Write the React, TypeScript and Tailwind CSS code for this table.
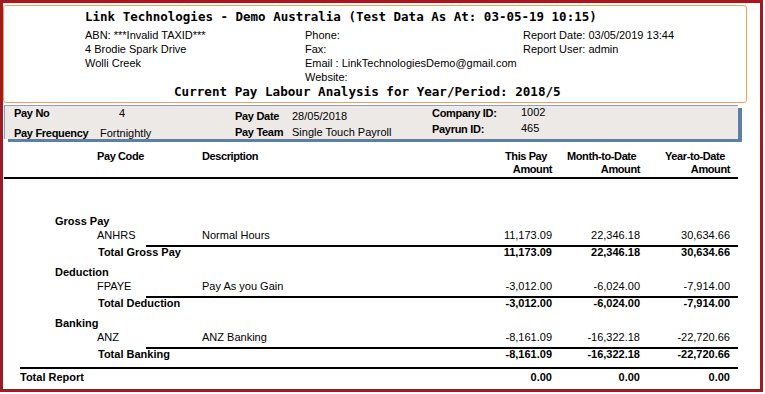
import React from 'react';

const mono = "font-['DejaVu_Sans_Mono','Liberation_Mono',monospace]";

type Item = { code: string; desc: string; amounts: string[] };
type Group = { name: string; total: string; item: Item; totals: string[] };

const groups: Group[] = [
  {
    name: 'Gross Pay',
    total: 'Total Gross Pay',
    item: { code: 'ANHRS', desc: 'Normal Hours', amounts: ['11,173.09', '22,346.18', '30,634.66'] },
    totals: ['11,173.09', '22,346.18', '30,634.66'],
  },
  {
    name: 'Deduction',
    total: 'Total Deduction',
    item: { code: 'FPAYE', desc: 'Pay As you Gain', amounts: ['-3,012.00', '-6,024.00', '-7,914.00'] },
    totals: ['-3,012.00', '-6,024.00', '-7,914.00'],
  },
  {
    name: 'Banking',
    total: 'Total Banking',
    item: { code: 'ANZ', desc: 'ANZ Banking', amounts: ['-8,161.09', '-16,322.18', '-22,720.66'] },
    totals: ['-8,161.09', '-16,322.18', '-22,720.66'],
  },
];

const Amounts: React.FC<{ values: string[]; bold?: boolean }> = ({ values, bold }) => (
  <>
    <div className={`w-[90px] text-right ${bold ? 'font-bold' : ''}`}>{values[0]}</div>
    <div className={`w-[88px] text-right ${bold ? 'font-bold' : ''}`}>{values[1]}</div>
    <div className={`w-[90px] text-right ${bold ? 'font-bold' : ''}`}>{values[2]}</div>
  </>
);

const App: React.FC = () => {
  return (
    <div className="w-[765px] h-[394px] bg-white overflow-hidden">
      <div className="w-[763px] h-[392px] border-[3px] border-[#9f1b21] bg-white text-black font-['Liberation_Sans',Arial,sans-serif] text-[11px]">
        {/* Report header */}
        <div className="mt-[2px] w-[744px] h-[98px] border border-[#f5a24a] rounded-[3px]">
          <div className={`${mono} font-bold text-[12.5px] leading-[15px] pt-[3px] pl-[81px] whitespace-nowrap`}>
            Link Technologies - Demo Australia (Test Data As At: 03-05-19 10:15)
          </div>
          <div className="mt-[4px] pl-[81px] flex leading-[14px] whitespace-nowrap">
            <div className="w-[220px]">
              <div>ABN: ***Invalid TAXID***</div>
              <div>4 Brodie Spark Drive</div>
              <div>Wolli Creek</div>
            </div>
            <div className="w-[218px]">
              <div>Phone:</div>
              <div>Fax:</div>
              <div>Email : LinkTechnologiesDemo@gmail.com</div>
              <div>Website:</div>
            </div>
            <div>
              <div>Report Date: 03/05/2019 13:44</div>
              <div>Report User: admin</div>
            </div>
          </div>
          <div className={`${mono} font-bold text-[12.6px] leading-[15px] pl-[170px] whitespace-nowrap`}>
            Current Pay Labour Analysis for Year/Period: 2018/5
          </div>
        </div>

        {/* Pay summary band */}
        <div className="mt-[2px] ml-[1px] w-[734px] h-[34px] bg-[#ece9e6] border-l border-t border-[#8ba0bb] shadow-[4px_3px_0_#5c7fa6] flex leading-[14px] whitespace-nowrap">
          <div className="w-[230px] pl-[9px]">
            <div className="flex">
              <div className="w-[105px] font-bold tracking-[-0.3px]">Pay No</div>
              <div>4</div>
            </div>
            <div className="flex mt-[6px]">
              <div className="w-[86px] font-bold tracking-[-0.3px]">Pay Frequency</div>
              <div>Fortnightly</div>
            </div>
          </div>
          <div className="w-[197px] pt-[3px]">
            <div className="flex">
              <div className="w-[57px] font-bold tracking-[-0.3px]">Pay Date</div>
              <div>28/05/2018</div>
            </div>
            <div className="flex mt-[2px]">
              <div className="w-[57px] font-bold tracking-[-0.3px]">Pay Team</div>
              <div>Single Touch Payroll</div>
            </div>
          </div>
          <div>
            <div className="flex">
              <div className="w-[89px] font-bold tracking-[-0.3px]">Company ID:</div>
              <div className="-mt-[1px]">1002</div>
            </div>
            <div className="flex mt-[2px]">
              <div className="w-[89px] font-bold tracking-[-0.3px]">Payrun ID:</div>
              <div className="-mt-[1px]">465</div>
            </div>
          </div>
        </div>

        {/* Column headings */}
        <div className="mt-[11px] flex font-bold leading-[13px] tracking-[-0.4px] whitespace-nowrap">
          <div className="w-[94px]" />
          <div className="w-[105px]">Pay Code</div>
          <div className="w-[300px]">Description</div>
          <div className="w-[50px] flex flex-col pl-[3px]">
            <span>This Pay</span>
            <span className="self-end">Amount</span>
          </div>
          <div className="w-[88px] flex flex-col pl-[15px]">
            <span>Month-to-Date</span>
            <span className="self-end">Amount</span>
          </div>
          <div className="w-[90px] flex flex-col pl-[25px]">
            <span>Year-to-Date</span>
            <span className="self-end">Amount</span>
          </div>
        </div>
        <div className="mt-[1px] ml-[1px] w-[734px] h-[2px] bg-black" />

        {/* Rows */}
        <div className="mt-[35px] whitespace-nowrap">
          {groups.map((g, i) => (
            <div key={g.name} className={i > 0 ? 'mt-[8px]' : ''}>
              <div className="pl-[52px] font-bold leading-[14px]">{g.name}</div>
              <div className="flex leading-[14px]">
                <div className="w-[94px]" />
                <div className="w-[105px]">{g.item.code}</div>
                <div className="w-[260px]">{g.item.desc}</div>
                <Amounts values={g.item.amounts} />
              </div>
              <div className="mt-[3px] ml-[143px] w-[592px] h-[2px] bg-black" />
              <div className="flex leading-[10px]">
                <div className="w-[459px] pl-[95px] font-bold">{g.total}</div>
                <Amounts values={g.totals} bold />
              </div>
            </div>
          ))}
          <div className="mt-[8px] ml-[17px] w-[718px] h-[2px] bg-black" />
          <div className="mt-[1px] flex leading-[14px]">
            <div className="w-[459px] pl-[17px] font-bold">Total Report</div>
            <Amounts values={['0.00', '0.00', '0.00']} bold />
          </div>
        </div>
      </div>
    </div>
  );
};

export default App;
